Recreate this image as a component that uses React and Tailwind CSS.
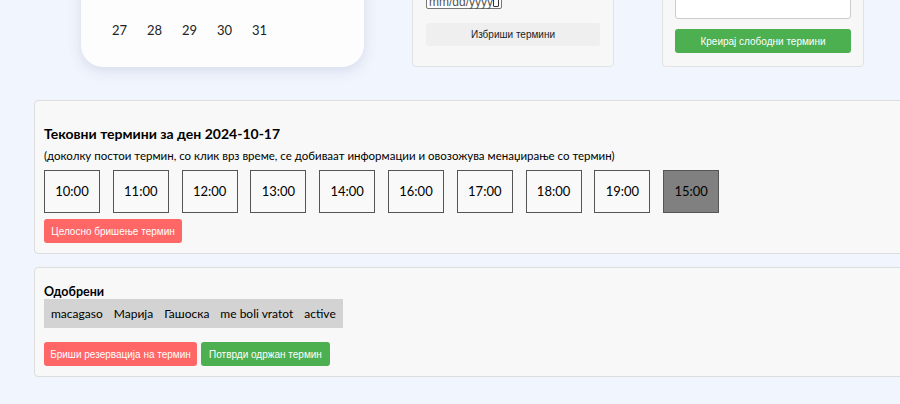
import React from 'react';

const comic = "font-['Comic_Sans_MS','Lato',sans-serif]";
const arial = "font-['Liberation_Sans',Arial,sans-serif]";

const times = ['10:00', '11:00', '12:00', '13:00', '14:00', '16:00', '17:00', '18:00', '19:00', '15:00'];
const names = ['macagaso', 'Марија', 'Гашоска', 'me boli vratot', 'active'];

const App = () => {
  return (
    <div className={`w-[900px] h-[404px] overflow-hidden bg-[#f1f5fd] ${comic} text-black`}>
      <div className="flex items-end h-[67px]">
        <div className="ml-[81px] w-[283px] h-[120px] -mt-[53px] bg-[#fdfdfd] rounded-b-[22px] shadow-[0_4px_14px_rgba(60,80,140,0.15)] flex items-end">
          <div className="flex pl-[31px] pb-[27px] text-[13px] text-[#222] font-['Lato',sans-serif]">
            {['27', '28', '29', '30', '31'].map((d) => (
              <span key={d} className="w-[35px]">{d}</span>
            ))}
          </div>
        </div>
        <div className="ml-[48px] w-[202px] h-[80px] -mt-[13px] bg-[#f7f7f7] border border-[#e2e2e2] rounded-[4px] px-[13px] flex flex-col justify-end pb-[20px]">
          <div className={`w-[76px] h-[22px] bg-white border border-[#767676] rounded-[2px] text-[12px] text-[#555] flex items-end justify-between px-[2px] ${arial}`}>
            <span className="leading-[12px]">mm/dd/yyyy</span>
            <span className="w-[10px] h-[9px] border border-[#333] rounded-[1px] mb-[1px]"></span>
          </div>
          <button className={`mt-[14px] h-[24px] w-full bg-[#efefef] rounded-[3px] text-[10px] text-[#222] whitespace-nowrap ${arial}`}>Избриши термини</button>
        </div>
        <div className="ml-[48px] w-[202px] h-[80px] -mt-[13px] bg-[#f7f7f7] border border-[#e2e2e2] rounded-[4px] px-[12px] flex flex-col justify-end pb-[13px]">
          <div className="h-[32px] bg-white border border-[#ccc] rounded-[3px]"></div>
          <button className={`mt-[10px] h-[24px] w-full bg-[#4caf50] rounded-[3px] text-[10px] text-white whitespace-nowrap ${arial}`}>Креирај слободни термини</button>
        </div>
      </div>

      <div className="ml-[34px] mt-[33px] w-[900px] h-[154px] bg-[#f8f8f8] border border-[#ddd] rounded-[4px] px-[9px] pt-[22px]">
        <h2 className="text-[14px] font-bold leading-[22px]">Тековни термини за ден 2024-10-17</h2>
        <p className="text-[11.5px] leading-[18px] mt-[2px]">(доколку постои термин, со клик врз време, се добиваат информации и овозожува менаџирање со термин)</p>
        <div className="flex gap-[12.8px] mt-[5px]">
          {times.map((t, i) => (
            <div
              key={t}
              className={`w-[56px] h-[43px] border border-[#555] flex items-center justify-center text-[13px] ${
                i === times.length - 1 ? 'bg-[#808080]' : 'bg-[#f9f9f9]'
              }`}
            >
              {t}
            </div>
          ))}
        </div>
        <button className={`mt-[6px] w-[138px] h-[24px] bg-[#ff6666] rounded-[3px] text-[10px] text-white whitespace-nowrap ${arial}`}>Целосно бришење термин</button>
      </div>

      <div className="ml-[34px] mt-[13px] w-[900px] h-[110px] bg-[#f8f8f8] border border-[#ddd] rounded-[4px] px-[9px] pt-[16px]">
        <div className="text-[12.5px] font-bold leading-[15px]">Одобрени</div>
        <div className="inline-flex bg-[#d3d3d3] h-[29px] items-center px-[7px] gap-[11px] text-[12px]">
          {names.map((n) => (
            <span key={n}>{n}</span>
          ))}
        </div>
        <div className="flex gap-[4px] mt-[14px]">
          <button className={`w-[153px] h-[24px] bg-[#ff6666] rounded-[3px] text-[10px] text-white whitespace-nowrap ${arial}`}>Бриши резервација на термин</button>
          <button className={`w-[129px] h-[24px] bg-[#4caf50] rounded-[3px] text-[10px] text-white whitespace-nowrap ${arial}`}>Потврди одржан термин</button>
        </div>
      </div>
    </div>
  );
};

export default App;
